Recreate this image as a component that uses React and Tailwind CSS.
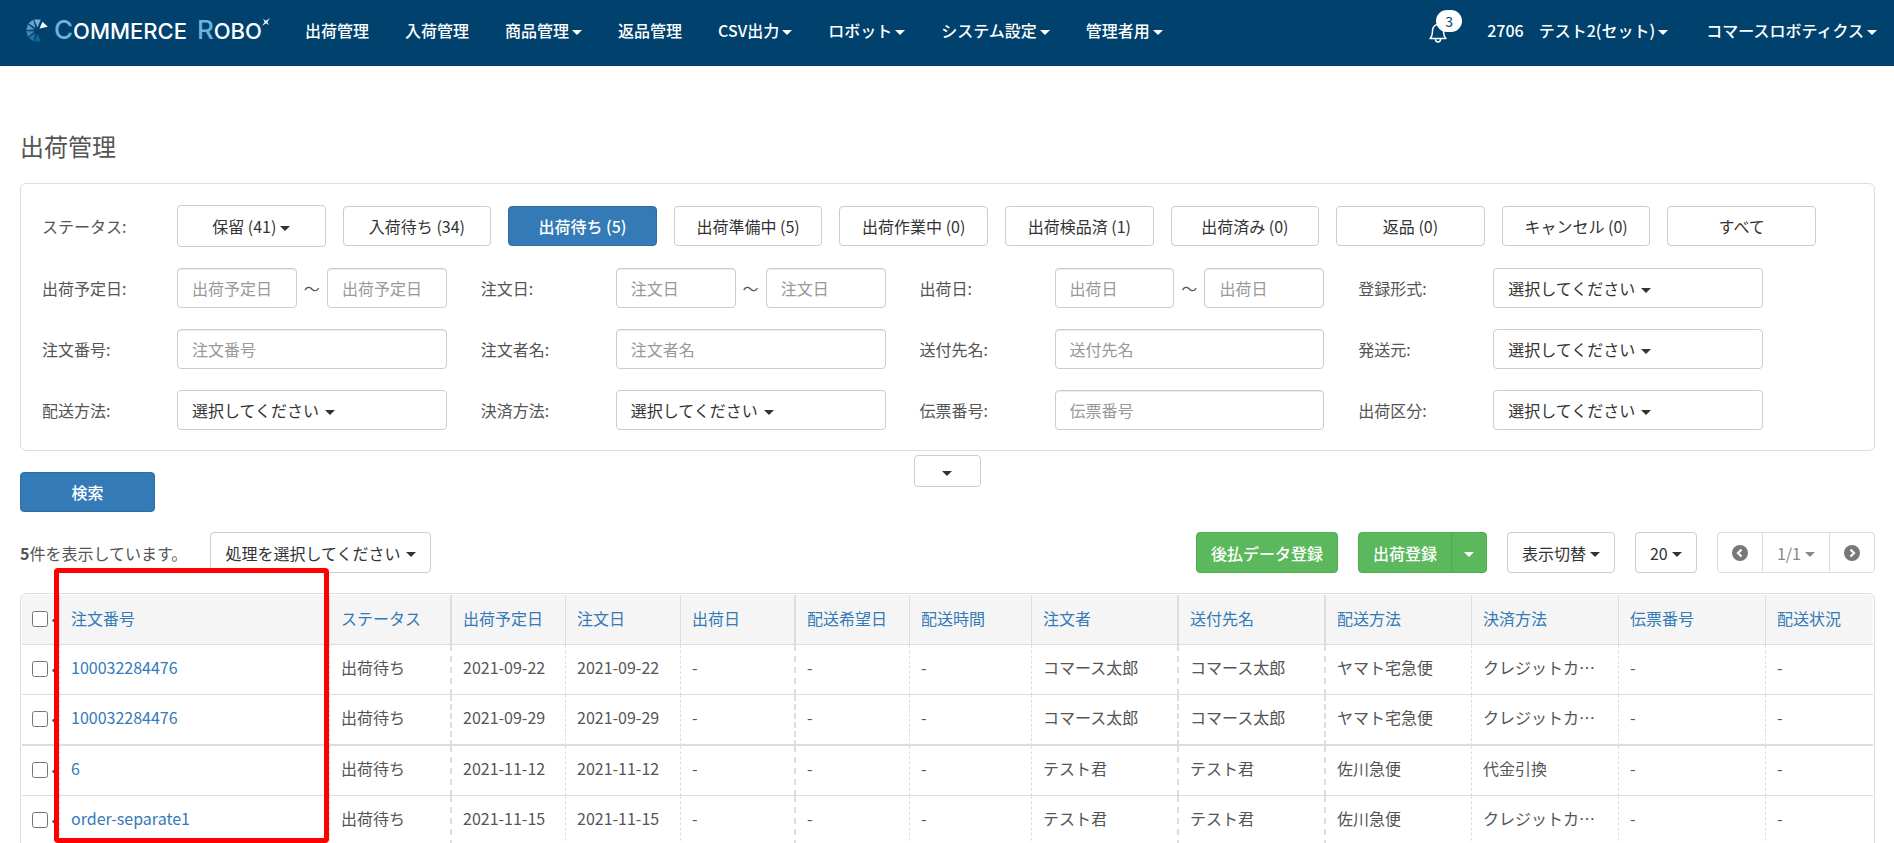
import { useState } from 'react';

const statuses = [
  '入荷待ち (34)',
  '出荷待ち (5)',
  '出荷準備中 (5)',
  '出荷作業中 (0)',
  '出荷検品済 (1)',
  '出荷済み (0)',
  '返品 (0)',
  'キャンセル (0)',
  'すべて',
];

const fields = [
  { id: 'ship-plan', label: '出荷予定日', type: 'range' },
  { id: 'order-date', label: '注文日', type: 'range' },
  { id: 'ship-date', label: '出荷日', type: 'range' },
  { id: 'register-type', label: '登録形式', type: 'select' },
  { id: 'order-no', label: '注文番号', type: 'text' },
  { id: 'orderer', label: '注文者名', type: 'text' },
  { id: 'receiver', label: '送付先名', type: 'text' },
  { id: 'ship-from', label: '発送元', type: 'select' },
  { id: 'delivery', label: '配送方法', type: 'select' },
  { id: 'payment', label: '決済方法', type: 'select' },
  { id: 'slip-no', label: '伝票番号', type: 'text' },
  { id: 'ship-class', label: '出荷区分', type: 'select' },
];

const navItems = [
  { label: '出荷管理' },
  { label: '入荷管理' },
  { label: '商品管理', menu: true },
  { label: '返品管理' },
  { label: 'CSV出力', menu: true },
  { label: 'ロボット', menu: true },
  { label: 'システム設定', menu: true },
  { label: '管理者用', menu: true },
];

const columns = [
  { label: '注文番号', width: 'w-[270px]', line: 'border-r' },
  { label: 'ステータス', width: 'w-[122px]', line: 'border-r-2' },
  { label: '出荷予定日', width: 'w-[114px]', line: 'border-r' },
  { label: '注文日', width: 'w-[115px]', line: 'border-r' },
  { label: '出荷日', width: 'w-[115px]', line: 'border-r-2' },
  { label: '配送希望日', width: 'w-[114px]', line: 'border-r' },
  { label: '配送時間', width: 'w-[122px]', line: 'border-r' },
  { label: '注文者', width: 'w-[147px]', line: 'border-r-2' },
  { label: '送付先名', width: 'w-[147px]', line: 'border-r-2' },
  { label: '配送方法', width: 'w-[146px]', line: 'border-r' },
  { label: '決済方法', width: 'w-[147px]', line: 'border-r' },
  { label: '伝票番号', width: 'w-[147px]', line: 'border-r' },
  { label: '配送状況', width: '', line: '' },
];

const orders = [
  ['100032284476', '出荷待ち', '2021-09-22', '2021-09-22', '-', '-', '-', 'コマース太郎', 'コマース太郎', 'ヤマト宅急便', 'クレジットカ…', '-', '-'],
  ['100032284476', '出荷待ち', '2021-09-29', '2021-09-29', '-', '-', '-', 'コマース太郎', 'コマース太郎', 'ヤマト宅急便', 'クレジットカ…', '-', '-'],
  ['6', '出荷待ち', '2021-11-12', '2021-11-12', '-', '-', '-', 'テスト君', 'テスト君', '佐川急便', '代金引換', '-', '-'],
  ['order-separate1', '出荷待ち', '2021-11-15', '2021-11-15', '-', '-', '-', 'テスト君', 'テスト君', '佐川急便', 'クレジットカ…', '-', '-'],
];

const buttonBase = 'flex items-center justify-center gap-1 rounded border border-[#ccc] bg-white text-[#333]';
const inputBase =
  'h-10 min-w-0 rounded border border-[#ccc] bg-white px-3.5 text-[#555] shadow-[inset_0_1px_1px_rgba(0,0,0,0.08)] placeholder:text-[#999]';

const Caret = () => (
  <svg className="mt-1 h-[5px] w-[10px] shrink-0" viewBox="0 0 10 5" fill="currentColor" aria-hidden="true">
    <path d="M0 0h10L5 5z" />
  </svg>
);

const SelectBox = ({ id, text, label, className = '' }) => (
  <div className={`flex items-center gap-1 rounded border border-[#ccc] bg-white px-3.5 text-[#333] ${className}`}>
    <select id={id} aria-label={label} className="appearance-none bg-transparent">
      <option>{text}</option>
    </select>
    <Caret />
  </div>
);

const Logo = () => (
  <a href="#" aria-label="Commerce Robo" className="flex w-[244px] shrink-0 items-center">
    <svg className="h-6 w-6 shrink-0" viewBox="0 0 24 24" aria-hidden="true">
      <path d="M8 1.500h6.800L11.500 9.500z" fill="#78add6" />
      <path d="M7.200 1.800L2.500 5.200l7 4.800z" fill="#6aa3d0" />
      <path d="M1.900 6.200L.3 11.900l8.200-.4z" fill="#5b96c6" />
      <path d="M.3 13.100l1.600 5.700 6.600-5.300z" fill="#4088b8" />
      <path d="M2.500 19.800l4.700 3.400 2.300-8.200z" fill="#1f78aa" />
      <path d="M8 23.500h6.800L11.500 15.500z" fill="#0a6699" />
      <path d="M13.500 10.500l3-6.700 5.300 5z" fill="#fff" />
    </svg>
    <span className="ml-1 font-['Inter',sans-serif] text-[22px] leading-6 font-medium whitespace-pre text-white">
      <span className="text-[26px] text-[#6fb1dc]">C</span>OMMERCE <span className="ml-1 text-[26px] text-[#6fb1dc]">R</span>OBO
    </span>
    <svg className="mb-4 h-2 w-2 shrink-0" viewBox="0 0 8 8" fill="#fff" aria-hidden="true">
      <path d="M8 0L5.300 4 7 7 4 5.300 0 8l2.700-4L1 1l3 1.700z" />
    </svg>
  </a>
);

const Header = () => (
  <header className="flex h-[66px] items-center bg-[#00416d] pr-[17px] pb-1.5 pl-[26px] font-medium text-white">
    <Logo />
    <nav className="ml-[35px] flex items-center gap-9">
      {navItems.map((item) =>
        item.menu ? (
          <button key={item.label} type="button" className="flex items-center gap-[3px]">
            {item.label}
            <Caret />
          </button>
        ) : (
          <a key={item.label} href="#">
            {item.label}
          </a>
        ),
      )}
    </nav>
    <div className="ml-auto flex items-center">
      <button type="button" aria-label="お知らせ" className="relative">
        <svg className="mt-1 h-6 w-[18px]" viewBox="0 0 18 24" fill="none" stroke="#fff" strokeWidth="1.500" aria-hidden="true">
          <path d="M1 18.500h16c-2-2-2.500-4-2.500-8C14.500 7 12 4.500 9 4.500S3.500 7 3.500 10.500c0 4-.5 6-2.500 8z" strokeLinejoin="round" />
          <path d="M6.500 19a2.500 3 0 0 0 5 0" />
          <path d="M9 2.500v2" />
        </svg>
        <span className="absolute -top-1.5 left-[7px] flex h-[22px] w-[26px] items-center justify-center rounded-full bg-white text-sm font-normal text-[#00416d]">
          3
        </span>
      </button>
      <button type="button" className="ml-10 flex items-center gap-[3px] whitespace-pre">
        <span className="mr-3">2706</span>
        テスト2(セット)
        <Caret />
      </button>
      <button type="button" className="ml-[38px] flex items-center gap-[3px]">
        コマースロボティクス
        <Caret />
      </button>
    </div>
  </header>
);

const Field = ({ field }) => (
  <div className="flex items-center">
    <label htmlFor={field.id} className="w-[135px] shrink-0">
      {field.label}:
    </label>
    {field.type === 'range' && (
      <div className="flex min-w-0 flex-1 items-center">
        <input id={field.id} type="text" placeholder={field.label} className={`${inputBase} w-0 flex-1`} />
        <span className="w-[30px] text-center">〜</span>
        <input type="text" aria-label={`${field.label} 終了`} placeholder={field.label} className={`${inputBase} w-0 flex-1`} />
      </div>
    )}
    {field.type === 'text' && <input id={field.id} type="text" placeholder={field.label} className={`${inputBase} w-0 flex-1`} />}
    {field.type === 'select' && <SelectBox id={field.id} text="選択してください" className="h-10 flex-1" />}
  </div>
);

const SearchPanel = () => {
  const [active, setActive] = useState('出荷待ち (5)');

  return (
    <section className="rounded-md border border-[#ddd] pt-[21px] pb-5 pl-[21px]">
      <div className="flex items-center pr-[58px]">
        <span className="w-[135px] shrink-0">ステータス:</span>
        <div className="grid flex-1 grid-cols-10 items-center gap-[17px]">
          <button type="button" className={`${buttonBase} h-[42px]`}>
            保留 (41)
            <Caret />
          </button>
          {statuses.map((status) => (
            <button
              key={status}
              type="button"
              onClick={() => setActive(status)}
              className={
                status === active
                  ? 'h-10 rounded border border-[#2e6da4] bg-[#337ab7] font-medium text-white'
                  : `${buttonBase} h-10`
              }
            >
              {status}
            </button>
          ))}
        </div>
      </div>
      <div className="mt-[21px] grid grid-cols-4 gap-x-[34px] gap-y-[21px] pr-[111px]">
        {fields.map((field) => (
          <Field key={field.id} field={field} />
        ))}
      </div>
    </section>
  );
};

const PagerIcon = ({ d }) => (
  <svg className="h-4 w-4" viewBox="0 0 16 16" aria-hidden="true">
    <circle cx="8" cy="8" r="8" fill="#777" />
    <path d={d} fill="none" stroke="#fff" strokeWidth="2.200" />
  </svg>
);

const Toolbar = () => (
  <div className="mt-5 flex h-[41px] items-stretch">
    <p className="self-center">
      <b>5</b>件を表示しています。
    </p>
    <SelectBox label="処理" text="処理を選択してください" className="ml-[23px]" />
    <div className="ml-auto flex items-stretch gap-5">
      <button type="button" className="rounded border border-[#4cae4c] bg-[#5cb85c] px-3.5 font-medium text-white">
        後払データ登録
      </button>
      <div className="flex rounded border border-[#4cae4c] bg-[#5cb85c] font-medium text-white">
        <button type="button" className="border-r border-[#4cae4c] px-3.5">
          出荷登録
        </button>
        <button type="button" aria-label="出荷登録メニュー" className="px-3">
          <Caret />
        </button>
      </div>
      <button type="button" className={`${buttonBase} px-3.5`}>
        表示切替
        <Caret />
      </button>
      <SelectBox label="表示件数" text="20" />
      <div className="flex items-stretch divide-x divide-[#ddd] rounded border border-[#ddd] text-[#888]">
        <button type="button" aria-label="前へ" className="px-3.5">
          <PagerIcon d="M9.500 4.500L6 8l3.500 3.500" />
        </button>
        <button type="button" className="flex items-center gap-1 px-3.5">
          1/1
          <Caret />
        </button>
        <button type="button" aria-label="次へ" className="px-3.5">
          <PagerIcon d="M6.500 4.500L10 8l-3.500 3.500" />
        </button>
      </div>
    </div>
  </div>
);

const RowCheck = ({ label }) => (
  <div className="flex items-center pl-2.5">
    <input type="checkbox" aria-label={label} className="h-4 w-4 shrink-0" />
    <span className="ml-px font-bold">·</span>
  </div>
);

const OrderTable = () => (
  <div className="relative mt-5">
    <div className="overflow-hidden rounded-md border border-[#ddd] p-px">
      <table className="w-full table-fixed border-separate border-spacing-0 text-left">
        <thead className="bg-[#f5f5f5]">
          <tr className="h-[50px]">
            <th className="w-[38px] border-r border-b border-[#ddd] p-0 pb-0.5 font-normal">
              <RowCheck label="すべて選択" />
            </th>
            {columns.map((column) => (
              <th
                key={column.label}
                className={`${column.width} ${column.line} truncate border-b border-[#ddd] px-[11px] pt-0 pb-1 font-normal text-[#337ab7]`}
              >
                <a href="#">{column.label}</a>
              </th>
            ))}
          </tr>
        </thead>
        <tbody>
          {orders.map((order, rowIndex) => (
            <tr key={`order-${rowIndex}`} className={rowIndex === 1 ? 'h-[51px]' : 'h-[50px]'}>
              <td className={`${rowIndex === 1 ? 'border-b-2' : 'border-b'} border-r border-[#ddd] p-0 pb-0.5 [border-right-style:dashed]`}>
                <RowCheck label={`${order[0]} を選択`} />
              </td>
              {order.map((value, index) => (
                <td
                  key={columns[index].label}
                  className={`${rowIndex === 1 ? 'border-b-2' : 'border-b'} ${columns[index].line} truncate border-[#ddd] px-[11px] pt-0 pb-1.5 [border-right-style:dashed]`}
                >
                  {index === 0 ? (
                    <a href="#" className="text-[#337ab7]">
                      {value}
                    </a>
                  ) : (
                    value
                  )}
                </td>
              ))}
            </tr>
          ))}
        </tbody>
      </table>
    </div>
    {/* highlight around the order number column */}
    <div className="pointer-events-none absolute -top-[25px] left-[34px] h-[275px] w-[275px] rounded-sm border-[5px] border-[#f00]" />
  </div>
);

const App = () => (
  <div className="h-screen overflow-hidden bg-white font-['Noto_Sans_CJK_JP',sans-serif] text-base text-[#555]">
    <Header />
    <main className="pr-[19px] pl-5">
      <h1 className="mt-[62px] mb-[19px] text-2xl leading-9">出荷管理</h1>
      <SearchPanel />
      <div className="mt-1 grid grid-cols-3 items-start">
        <button type="button" className="mt-[17px] h-10 w-[135px] rounded border border-[#2e6da4] bg-[#337ab7] font-medium text-white">
          検索
        </button>
        <button type="button" aria-label="詳細条件を開く" className={`${buttonBase} h-8 w-[67px] justify-self-center`}>
          <Caret />
        </button>
      </div>
      <Toolbar />
      <OrderTable />
    </main>
  </div>
);

export default App;
